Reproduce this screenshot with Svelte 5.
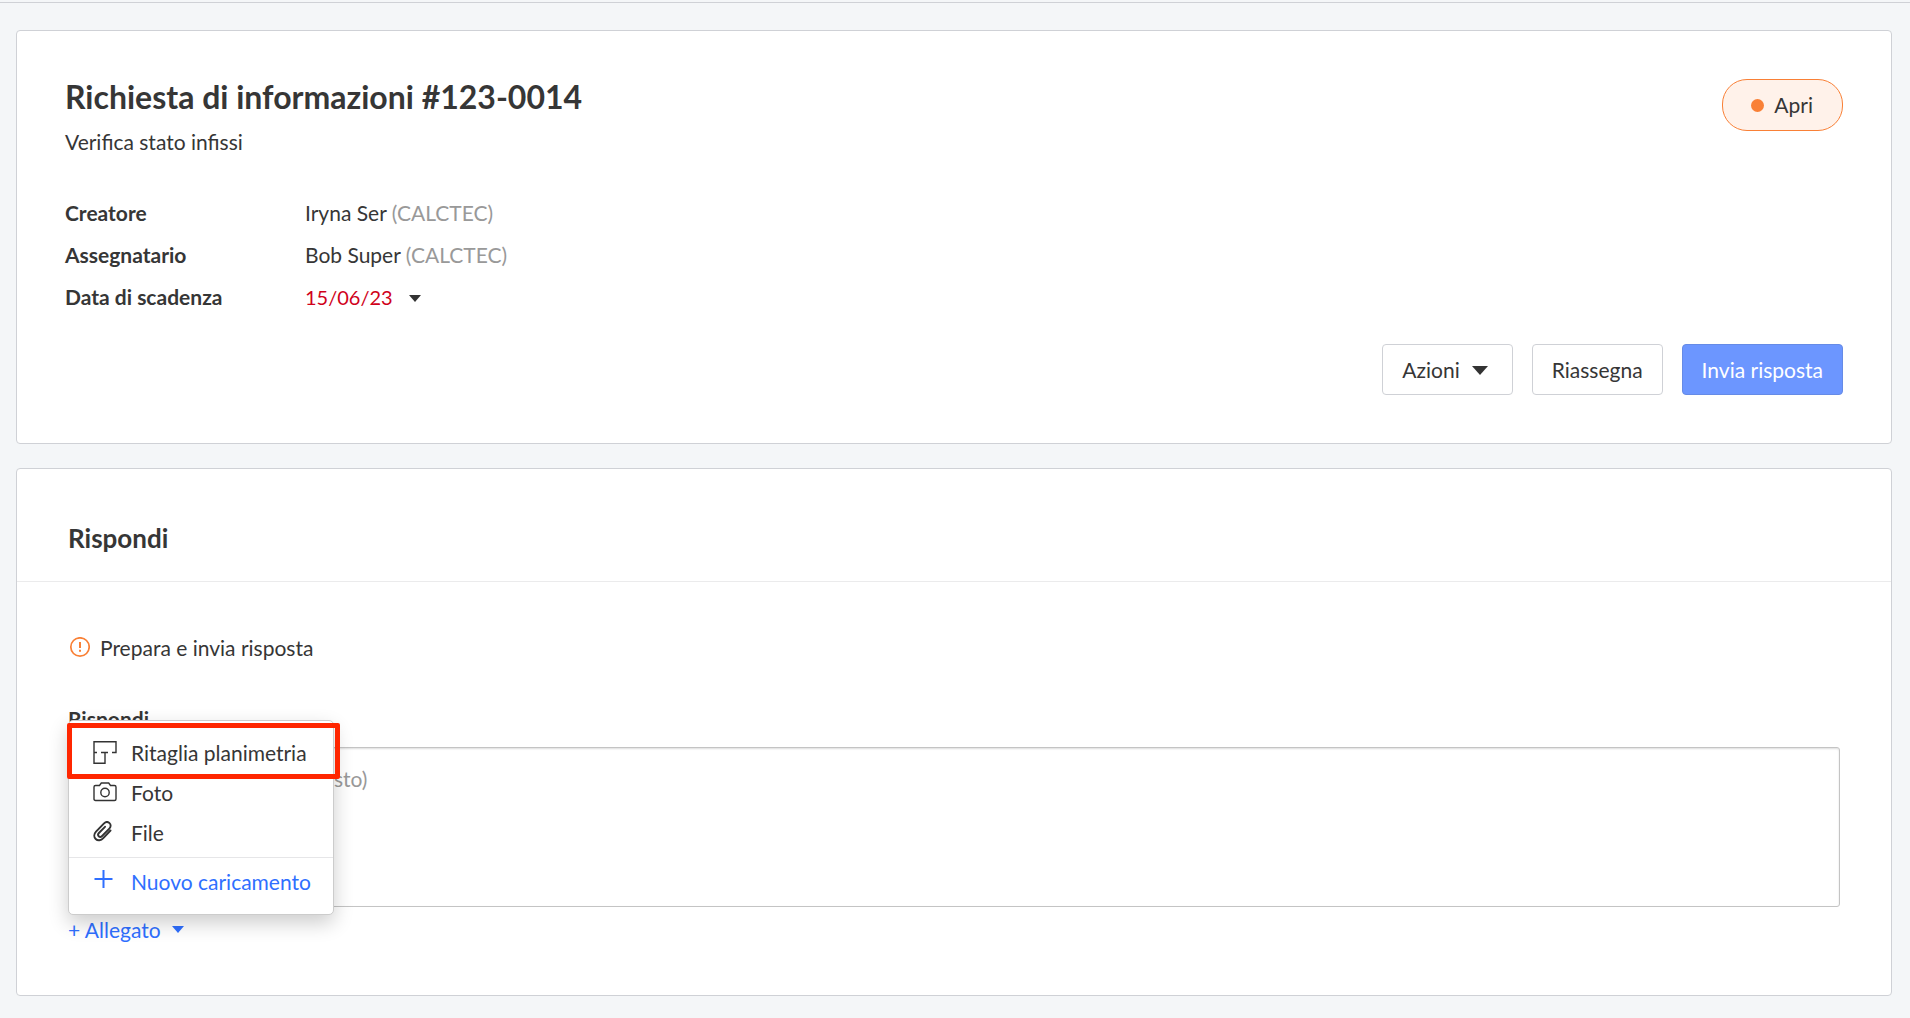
<script>
  const details = [
    { label: 'Creatore', name: 'Iryna Ser', company: '(CALCTEC)' },
    { label: 'Assegnatario', name: 'Bob Super', company: '(CALCTEC)' }
  ];
  let open = $state(true);
  let answer = $state('');
</script>

<main>
  <section class="card summary">
    <header class="top">
      <div>
        <h1>Richiesta di informazioni #123-0014</h1>
        <p class="subject">Verifica stato infissi</p>
      </div>
      <span class="status"><i class="dot"></i>Apri</span>
    </header>
    <dl>
      {#each details as d}
        <dt>{d.label}</dt>
        <dd>{d.name} <span class="muted">{d.company}</span></dd>
      {/each}
      <dt>Data di scadenza</dt>
      <dd>
        <button class="due" type="button">15/06/23
          <svg width="12" height="10" viewBox="0 0 12 10"><path d="M0 3h12L6 10z" fill="#333" /></svg>
        </button>
      </dd>
    </dl>
    <div class="actions">
      <button class="btn drop" type="button">Azioni
        <svg width="16" height="11" viewBox="0 0 16 11"><path d="M0 2h16L8 11z" fill="#333" /></svg>
      </button>
      <button class="btn" type="button">Riassegna</button>
      <button class="btn primary" type="button">Invia risposta</button>
    </div>
  </section>

  <section class="card reply">
    <h2>Rispondi</h2>
    <div class="body">
      <p class="notice">
        <svg width="22" height="22" viewBox="0 0 22 22" fill="none" stroke="#f98036">
          <circle cx="12" cy="10" r="9.2" stroke-width="1.7" />
          <path d="M12 5v6M12 12.800v2" stroke-width="2" />
        </svg>
        Prepara e invia risposta
      </p>
      <label for="answer">Rispondi</label>
      <textarea id="answer" bind:value={answer} placeholder="Scrivi la tua risposta (solo testo)"></textarea>
      <div class="attach">
        <button class="link" type="button" aria-expanded={open} onclick={() => (open = !open)}>+ Allegato
          <svg width="12" height="9" viewBox="0 0 12 9"><path d="M0 0h12L6 7z" fill="#2f6fff" /></svg>
        </button>
        {#if open}
          <div class="menu">
            <button class="item marked" type="button">
              <svg width="24" height="24" viewBox="0 0 24 24" fill="none" stroke="#333" stroke-width="1.4">
                <path d="M4 11.500H1V.700H23V11.500H19M8 11.500H15M12 11.500V22.300H1V11" />
              </svg>
              Ritaglia planimetria
            </button>
            <button class="item" type="button">
              <svg width="24" height="24" viewBox="0 0 24 24" fill="none" stroke="#333" stroke-width="1.4">
                <path d="M2.500 4.500H6.500L8.300 2H15.700L17.500 4.500H21.500Q23 4.500 23 6V18Q23 19.500 21.500 19.500H2.500Q1 19.500 1 18V6Q1 4.500 2.500 4.500Z" />
                <circle cx="12" cy="11.500" r="4.200" />
              </svg>
              Foto
            </button>
            <button class="item" type="button">
              <svg width="24" height="24" viewBox="0 0 24 24" fill="none" stroke="#333" stroke-width="1.900" stroke-linecap="round">
                <path d="M18 8.500L10.800 16.200C8.500 18.700 5.200 19 3.200 17C1.200 15 1.400 12 3.500 9.700L11.300 1.600C13 -.200 15.400 -.400 17 1.100C18.600 2.600 18.500 4.900 16.800 6.700L9.600 14C8.500 15.100 7.200 15.200 6.200 14.300C5.300 13.400 5.400 12.100 6.400 11L12.500 4.800" transform="translate(-.5 1)" />
              </svg>
              File
            </button>
            <hr />
            <button class="item new" type="button">
              <svg width="24" height="24" viewBox="0 0 24 24" fill="none" stroke="#2f6fff" stroke-width="2">
                <path d="M1.500 9H19.500M10.500 0V18" />
              </svg>
              Nuovo caricamento
            </button>
          </div>
        {/if}
      </div>
    </div>
  </section>
</main>

<style>
  :global(body) {
    background: #f4f6f8;
  }
  main {
    box-sizing: border-box;
    min-height: calc(100vh - 2px);
    margin-top: 2px;
    padding: 27px 18px 20px 16px;
    border-top: 1px solid #cfd1d6;
    font: 21px/32px Lato, sans-serif;
    color: #363636;
    display: flex;
    flex-direction: column;
    gap: 24px;
  }
  .card {
    background: #fff;
    border: 1px solid #cfd1d6;
    border-radius: 4px;
  }
  .summary {
    padding: 48px;
  }
  .top {
    display: flex;
    justify-content: space-between;
    align-items: flex-start;
  }
  h1, h2, p, dl, dd {
    margin: 0;
  }
  h1 {
    font-size: 32px;
    line-height: 36px;
  }
  .subject {
    margin-top: 11px;
  }
  .status {
    box-sizing: border-box;
    height: 52px;
    display: flex;
    align-items: center;
    gap: 10px;
    padding: 0 29px 0 28px;
    border: 1px solid #f98036;
    border-radius: 25px;
    background: #fff2ea;
  }
  .dot {
    width: 13px;
    height: 13px;
    border-radius: 50%;
    background: #f98036;
  }
  dl {
    margin-top: 34px;
    display: grid;
    grid-template-columns: 240px 1fr;
    line-height: 42px;
  }
  dt {
    font-weight: 700;
  }
  .muted {
    color: #999;
  }
  button {
    font: inherit;
    color: inherit;
    background: none;
    border: 0;
    padding: 0;
    cursor: pointer;
  }
  .due {
    display: flex;
    align-items: center;
    gap: 16px;
    font-size: 20px;
    color: #d0021b;
  }
  .actions {
    margin-top: 26px;
    display: flex;
    justify-content: flex-end;
    gap: 19px;
  }
  .btn {
    height: 51px;
    padding: 0 19px;
    border: 1px solid #cfd1d6;
    border-radius: 4px;
    background: #fff;
  }
  .drop {
    display: flex;
    align-items: center;
    gap: 12px;
    padding-right: 24px;
  }
  .primary {
    background: #6c96ff;
    border-color: #668be6;
    color: #fff;
  }
  h2 {
    font-size: 26px;
    line-height: 32px;
    padding: 53px 51px 27px;
    border-bottom: 1px solid #ebebec;
  }
  .body {
    padding: 50px 51px 49px;
    display: flex;
    flex-direction: column;
  }
  .notice {
    display: flex;
    align-items: center;
    gap: 10px;
  }
  label {
    margin-top: 39px;
    font-weight: 700;
  }
  textarea {
    box-sizing: border-box;
    height: 160px;
    margin: 12px 0 7px;
    padding: 15px 9px;
    border: 1px solid #c4c4c4;
    border-radius: 3px;
    box-shadow: inset 0 1px 2px #0002;
    font: inherit;
    color: inherit;
    resize: none;
  }
  textarea::placeholder {
    color: #999;
  }
  .attach {
    position: relative;
    align-self: flex-start;
  }
  .link {
    display: flex;
    align-items: center;
    gap: 11px;
    color: #2f6fff;
  }
  .menu {
    position: absolute;
    left: 0;
    top: -194px;
    display: flex;
    flex-direction: column;
    padding: 12px 0;
    border: 1px solid #ccc;
    border-radius: 5px;
    background: #fff;
    box-shadow: 0 8px 20px #0003;
    white-space: nowrap;
  }
  .item {
    position: relative;
    display: flex;
    align-items: center;
    gap: 14px;
    padding: 0 22px 0 24px;
    line-height: 40px;
  }
  .marked::after {
    content: '';
    position: absolute;
    inset: -10px -7px -6px -2px;
    border: 5px solid #ff2600;
    border-radius: 2px;
  }
  .new {
    color: #2f6fff;
  }
  hr {
    width: 100%;
    margin: 4px 0;
    border: 0;
    border-top: 1px solid #e6e6e8;
  }
</style>
